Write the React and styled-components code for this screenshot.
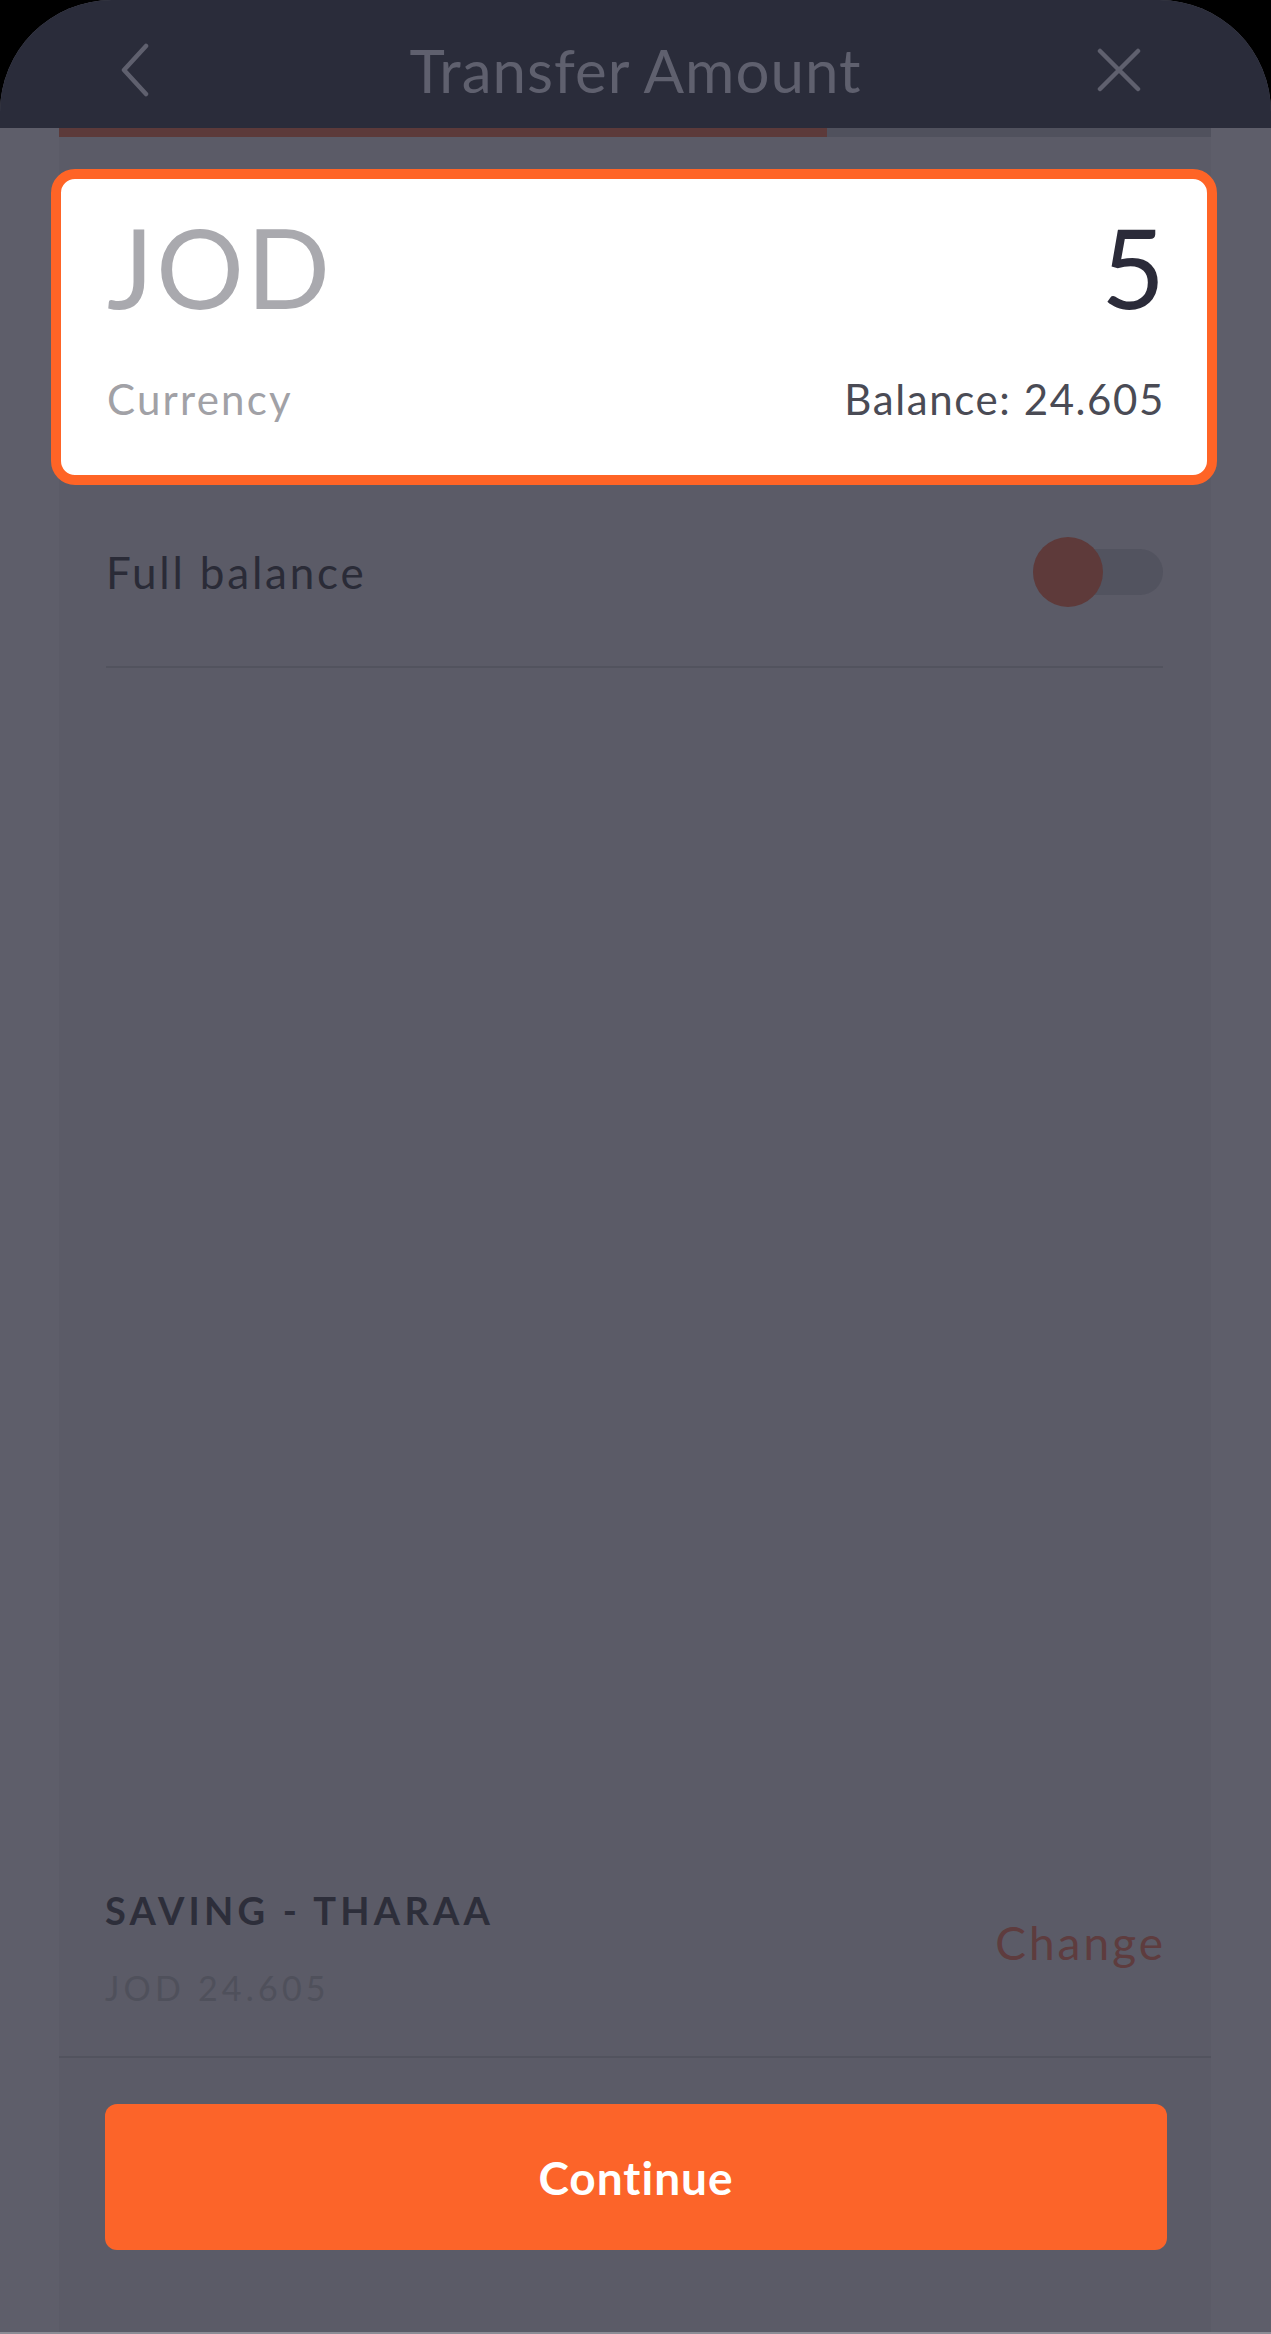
import React from 'react';
import styled, {createGlobalStyle} from 'styled-components';

const font = `Lato, "Open Sans", "Noto Sans", sans-serif`;

const GlobalStyle = createGlobalStyle`
  html, body {
    margin: 0;
    padding: 0;
    background: #000;
  }
  * { box-sizing: border-box; }
`;

// whole phone screen, dimmed by the tutorial overlay
const Screen = styled.div`
  width: 1271px;
  height: 2334px;
  display: flex;
  flex-direction: column;
  background-color: #5e5e6a;
  border-radius: 112px 112px 0 0;
  border-bottom: 2px solid #8b8c95;
  overflow: hidden;
  font-family: ${font};
`;

const Header = styled.header`
  height: 128px;
  flex-shrink: 0;
  display: grid;
  grid-template-columns: 200px 1fr 200px;
  align-items: center;
  padding-top: 12px;
  background-color: #2a2c3a;
`;

const Title = styled.h1`
  margin: 0;
  text-align: center;
  font-size: 60px;
  line-height: 1;
  font-weight: 400;
  letter-spacing: 1px;
  color: #5f606e;
`;

const IconButton = styled.div`
  display: flex;
  align-items: center;
  justify-content: ${props => props.right ? 'flex-end' : 'flex-start'};
  padding: 0 ${props => props.right ? '130px' : '0'} 0 ${props => props.right ? '0' : '120px'};
  color: #5f606e;
`;

// lighter content column between the two side gutters
const Panel = styled.main`
  flex: 1;
  margin: 0 60px 0 59px;
  display: flex;
  flex-direction: column;
  background-color: #5b5b67;
`;

const Progress = styled.div`
  height: 9px;
  background-color: #50515d;
`;

const ProgressFill = styled.div`
  height: 100%;
  background-color: #5c3a3a;
`;

const AmountCard = styled.section`
  margin: 32px -6px 0 -8px;
  height: 316px;
  padding: 32px 42px 55px 46px;
  background: #fff;
  border: 10px solid #ff6426;
  border-radius: 24px;
  display: grid;
  grid-template-columns: 1fr auto;
  grid-template-rows: 110px 42px;
  row-gap: 57px;
`;

const BigText = styled.div`
  font-size: 110px;
  line-height: 1;
  letter-spacing: ${props => props.dark ? '0' : '2.5px'};
  color: ${props => props.dark ? '#2b2b39' : '#a9a9ae'};
  text-align: ${props => props.dark ? 'right' : 'left'};
`;

const SmallText = styled.div`
  font-size: 42px;
  line-height: 1;
  letter-spacing: ${props => props.dark ? '1.6px' : '2.2px'};
  color: ${props => props.dark ? '#4a4b55' : '#a1a1a6'};
  text-align: ${props => props.dark ? 'right' : 'left'};
`;

const OptionRow = styled.div`
  height: 183px;
  margin: 0 48px 0 47px;
  padding-bottom: 8px;
  display: flex;
  align-items: center;
  justify-content: space-between;
  border-bottom: 2px solid #52535e;
`;

const OptionLabel = styled.span`
  font-size: 44px;
  line-height: 1;
  letter-spacing: 2.8px;
  color: #2a2b37;
`;

const Toggle = styled.div`
  position: relative;
  width: 130px;
  height: 70px;
  display: flex;
  align-items: center;
`;

const Track = styled.div`
  width: 100%;
  height: 46px;
  border-radius: 23px;
  background-color: #52535f;
`;

const Knob = styled.div`
  position: absolute;
  left: 0;
  top: 0;
  width: 70px;
  height: 70px;
  border-radius: 50%;
  background-color: #5e3a3a;
`;

const Spacer = styled.div`
  flex: 1;
`;

const Account = styled.section`
  display: flex;
  align-items: center;
  justify-content: space-between;
  padding: 0 48px 51px 46px;
  border-bottom: 2px solid #52535e;
`;

const AccountInfo = styled.div`
  display: flex;
  flex-direction: column;
  gap: 42px;
`;

const AccountName = styled.div`
  font-size: 38px;
  line-height: 1;
  font-weight: 700;
  letter-spacing: 4.2px;
  color: #2d2e3a;
`;

const AccountBalance = styled.div`
  font-size: 34px;
  line-height: 1;
  letter-spacing: 4.2px;
  color: #4f505b;
`;

const ChangeLink = styled.span`
  font-size: 46px;
  line-height: 1;
  margin: 0 -3px 11px 0;
  letter-spacing: 3px;
  color: #5e3c3e;
`;

const Footer = styled.div`
  padding: 46px 44px 82px 46px;
`;

const ContinueButton = styled.button`
  width: 100%;
  height: 146px;
  border: none;
  border-radius: 12px;
  background-color: #fc6429;
  color: #fff;
  font-family: ${font};
  font-size: 46px;
  font-weight: 700;
  letter-spacing: 1px;
`;

const BackIcon = () => (
  <svg width="30" height="54" viewBox="0 0 30 54" fill="none">
    <path d="M26 3 L4 27 L26 51" stroke="currentColor" strokeWidth="4.5" strokeLinecap="round" strokeLinejoin="round" />
  </svg>
);

const CloseIcon = () => (
  <svg width="44" height="44" viewBox="0 0 44 44" fill="none">
    <path d="M3 3 L41 41 M41 3 L3 41" stroke="currentColor" strokeWidth="4.5" strokeLinecap="round" />
  </svg>
);

export default function App() {
  const step = 768 / 1152;

  return (
    <>
      <GlobalStyle />
      <Screen>
        <Header>
          <IconButton><BackIcon /></IconButton>
          <Title>Transfer Amount</Title>
          <IconButton right><CloseIcon /></IconButton>
        </Header>
        <Panel>
          <Progress>
            <ProgressFill style={{width: (step * 100) + '%'}} />
          </Progress>

          <AmountCard>
            <BigText>JOD</BigText>
            <BigText dark>5</BigText>
            <SmallText>Currency</SmallText>
            <SmallText dark>Balance: 24.605</SmallText>
          </AmountCard>

          <OptionRow>
            <OptionLabel>Full balance</OptionLabel>
            <Toggle>
              <Track />
              <Knob />
            </Toggle>
          </OptionRow>

          <Spacer />

          <Account>
            <AccountInfo>
              <AccountName>SAVING - THARAA</AccountName>
              <AccountBalance>JOD 24.605</AccountBalance>
            </AccountInfo>
            <ChangeLink>Change</ChangeLink>
          </Account>

          <Footer>
            <ContinueButton>Continue</ContinueButton>
          </Footer>
        </Panel>
      </Screen>
    </>
  );
}
